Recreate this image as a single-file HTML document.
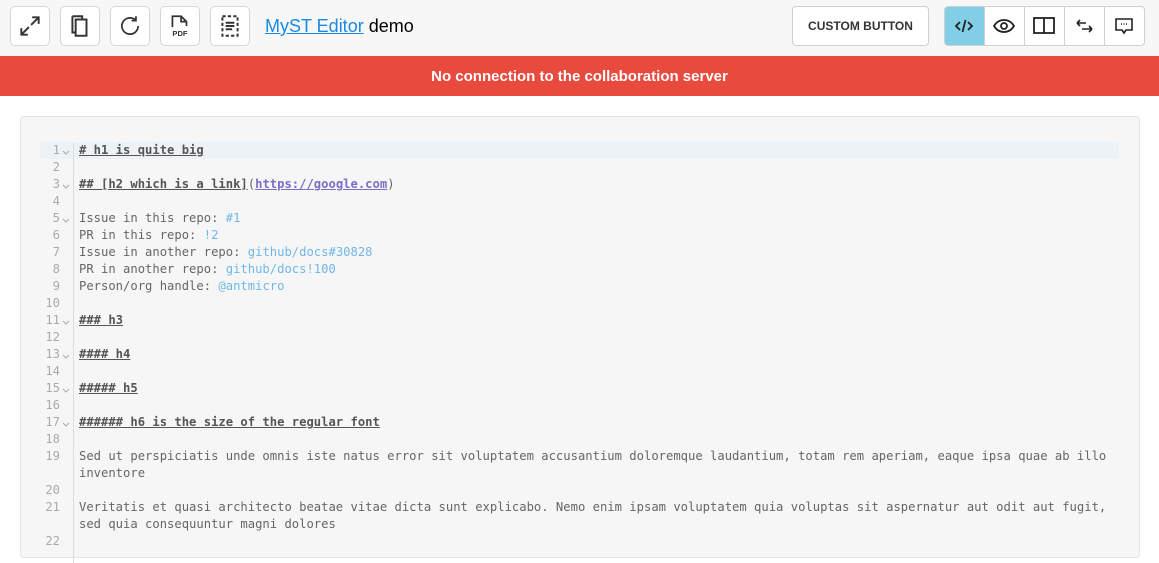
<!DOCTYPE html>
<html><head><style>
body{margin:0;width:1159px;height:538px;overflow:hidden;background:#fff;font-family:"Liberation Sans",sans-serif;}
.top{height:56px;background:#f7f7f7;position:relative;}
.b{position:absolute;top:6px;width:38px;height:38px;border:1px solid #d6d6d6;border-radius:5px;background:#fff;}
.b svg{position:absolute;left:6px;top:6px;}
.title{position:absolute;left:265px;top:16px;font-size:18px;color:#000;}
.title a{color:#1a8ae0;text-decoration:underline;}
.cb{position:absolute;left:792px;top:6px;width:135px;height:38px;border:1px solid #d0d0d0;border-radius:4px;background:#fff;font:bold 12px "Liberation Sans",sans-serif;color:#333;text-align:center;line-height:38px;}
.grp{position:absolute;left:944px;top:6px;height:38px;border:1px solid #d0d0d0;border-radius:4px;display:flex;overflow:hidden;background:#fff;}
.grp div{width:39px;height:38px;border-left:1px solid #d0d0d0;position:relative;}
.grp div:first-child{border-left:none;background:#80cfe6;}
.grp svg{position:absolute;left:8px;top:8px;}
.ban{height:40px;background:#e84a3d;color:#fff;font-weight:bold;font-size:15px;text-align:center;line-height:42px;}
.ed{position:absolute;left:20px;top:116px;width:1118px;height:440px;background:#f6f6f6;border:1px solid #e3e3e3;border-radius:4px;}
.gut{position:absolute;left:52px;top:26px;width:1px;height:420px;background:#ddd;}
.act{position:absolute;left:19px;top:25px;width:1079px;height:17px;background:#edf2f6;}
pre{margin:0;position:absolute;left:58px;top:25px;font:12.2px/17px "DejaVu Sans Mono",monospace;color:#666;white-space:pre;}
.h{font-weight:bold;text-decoration:underline;color:#555;}
.u{color:#7b6fc7;font-weight:bold;text-decoration:underline;}
.l{color:#70b7e8;}
.nums{position:absolute;left:10px;top:25px;width:29px;font:12.2px/17px "DejaVu Sans Mono",monospace;color:#aaa;text-align:right;}
.f{position:absolute;left:41px;}
</style></head><body>
<div class="top">
<div class="b" style="left:10px"><svg width="26" height="26" viewBox="0 0 24 24" fill="none" stroke="#333" stroke-width="1.8"><path d="M14 4h6v6M20 4l-7 7M10 20H4v-6M4 20l7-7"/></svg></div>
<div class="b" style="left:60px"><svg width="26" height="26" viewBox="0 0 24 24" fill="none" stroke="#333" stroke-width="1.8"><path d="M5 3h9v3M5 3v15h3"/><rect x="8" y="6" width="10" height="15"/></svg></div>
<div class="b" style="left:110px"><svg width="26" height="26" viewBox="0 0 24 24" fill="none" stroke="#333" stroke-width="1.6"><path d="M19.5 12a7.5 7.5 0 1 1-2.5-5.6"/><path d="M17.5 3v4h-4"/></svg></div>
<div class="b" style="left:160px"><svg width="26" height="26" viewBox="0 0 24 24" fill="none" stroke="#333" stroke-width="1.6"><path d="M5 13V3h8l5 5v4M13 3v5h5"/><text x="5" y="21" font-size="7" font-weight="bold" fill="#333" stroke="none" font-family="Liberation Sans">PDF</text></svg></div>
<div class="b" style="left:210px"><svg width="26" height="26" viewBox="0 0 24 24" fill="none" stroke="#333" stroke-width="1.8" stroke-dasharray="3 2"><rect x="5" y="3" width="14" height="18"/><path d="M8 9h8M8 12h8M8 15h6" stroke-dasharray="none"/></svg></div>
<div class="title"><a>MyST Editor</a> demo</div>
<div class="cb">CUSTOM BUTTON</div>
<div class="grp">
<div><svg width="22" height="22" viewBox="0 0 22 22" fill="none" stroke="#222" stroke-width="1.8"><path d="M7 7l-4 4 4 4M15 7l4 4-4 4M12.5 5l-3 12"/></svg></div>
<div><svg width="22" height="22" viewBox="0 0 22 22" fill="none" stroke="#222" stroke-width="1.8"><path d="M1 11c3-5 7-6 10-6s7 1 10 6c-3 5-7 6-10 6s-7-1-10-6z"/><circle cx="11" cy="11" r="3"/></svg></div>
<div><svg width="22" height="22" viewBox="0 0 22 22" fill="none" stroke="#222" stroke-width="1.8"><rect x="1" y="3" width="20" height="15"/><path d="M11 3v15"/></svg></div>
<div><svg width="22" height="22" viewBox="0 0 22 22" fill="none" stroke="#222" stroke-width="1.6"><path d="M4 8h9M4 8l3-3M4 8l3 3M9 14h10M19 14l-3-3M19 14l-3 3"/></svg></div>
<div><svg width="22" height="22" viewBox="0 0 22 22" fill="none" stroke="#222" stroke-width="1.6"><path d="M3 4h16v11h-6l-2 3-2-3H3z"/><path d="M8 9h1M10.5 9h1M13 9h1"/></svg></div>
</div>
</div>
<div class="ban">No connection to the collaboration server</div>
<div class="ed">
<div class="act"></div>
<div class="gut"></div>
<div class="nums">1<br>2<br>3<br>4<br>5<br>6<br>7<br>8<br>9<br>10<br>11<br>12<br>13<br>14<br>15<br>16<br>17<br>18<br>19<br><br>20<br>21<br><br>22</div>
<svg class="f" style="top:25px" width="10" height="340" viewBox="0 0 10 340" fill="none" stroke="#aaa" stroke-width="1">
<path d="M1 9l3 3 3-3M1 43l3 3 3-3M1 77l3 3 3-3M1 179l3 3 3-3M1 213l3 3 3-3M1 247l3 3 3-3M1 281l3 3 3-3"/></svg>
<pre><span class="h"># h1 is quite big</span>

<span class="h">## [h2 which is a link]</span>(<span class="u">https://google.com</span>)

Issue in this repo: <span class="l">#1</span>
PR in this repo: <span class="l">!2</span>
Issue in another repo: <span class="l">github/docs#30828</span>
PR in another repo: <span class="l">github/docs!100</span>
Person/org handle: <span class="l">@antmicro</span>

<span class="h">### h3</span>

<span class="h">#### h4</span>

<span class="h">##### h5</span>

<span class="h">###### h6 is the size of the regular font</span>

Sed ut perspiciatis unde omnis iste natus error sit voluptatem accusantium doloremque laudantium, totam rem aperiam, eaque ipsa quae ab illo
inventore

Veritatis et quasi architecto beatae vitae dicta sunt explicabo. Nemo enim ipsam voluptatem quia voluptas sit aspernatur aut odit aut fugit,
sed quia consequuntur magni dolores</pre>
</div>
</body></html>
